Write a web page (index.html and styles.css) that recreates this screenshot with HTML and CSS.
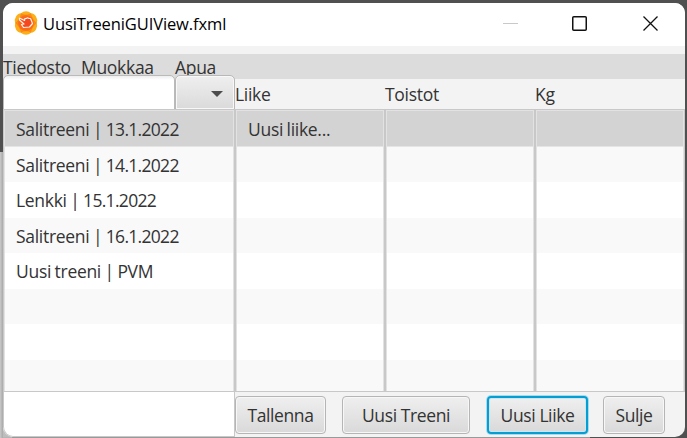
FILE: index.html
```html
<!DOCTYPE html>
<html lang="fi">
<head>
<meta charset="utf-8">
<title>UusiTreeniGUIView.fxml</title>
<link rel="stylesheet" href="styles.css">
</head>
<body>
<main class="window">
  <header class="titlebar">
    <svg class="logo" viewBox="0 0 24 24" width="24" height="24">
      <path d="M12 .3Q15 .3 17 2.300Q20.500 2.500 22 5.500Q24 8.500 22.800 12Q24 15.500 22 18.500Q20.500 21.500 17 21.700Q15 23.700 12 23.700Q9 23.700 7 21.700Q3.500 21.500 2 18.500Q0 15.500 1.200 12Q0 8.500 2 5.500Q3.500 2.500 7 2.300Q9 .3 12 .3Z" fill="#fbb01a"/>
      <path d="M7 2.300Q12 5 17 2.300Q18 8 22.800 12Q18 16 17 21.700Q12 19 7 21.700Q6 16 1.200 12Q6 8 7 2.300Z" fill="#fb8c12"/>
      <circle cx="12" cy="12" r="7.800" fill="#fa6a1c"/>
      <path d="M5.500 7 10.500 9.500 11 7.500 12.500 7.500 13.500 6.800 15 7.500 16.500 7.500 18.500 12.500 15.500 16 9.500 16.500 7.500 13.500 10 13 5.500 9Z" fill="#f4481e" stroke="#fff0e4" stroke-width="1.200" stroke-linejoin="round"/>
    </svg>
    <h1 class="title">UusiTreeniGUIView.fxml</h1>
    <svg class="controls" viewBox="0 0 160 20" width="160" height="20" fill="none">
      <path d="M3 10.500H18" stroke="#c9c9c9"/>
      <rect x="72.750" y="3.750" width="13.500" height="13.500" rx="1" stroke="#111" stroke-width="1.500"/>
      <path d="M143.500 3.500 157.500 17.500M157.500 3.500 143.500 17.500" stroke="#111" stroke-width="1.300"/>
    </svg>
  </header>
  <nav class="menubar"><span class="m1">Tiedosto</span><span class="m2">Muokkaa</span><span class="m3">Apua</span></nav>
  <section class="heads">
    <div class="combo"><div class="field"></div><div class="drop"><i></i></div></div>
    <span>Liike</span><span>Toistot</span><span>Kg</span>
  </section>
  <section class="lists">
    <ul class="list first"><li class="sel">Salitreeni | <span>13.1.2022</span></li><li>Salitreeni | <span>14.1.2022</span></li><li>Lenkki | <span>15.1.2022</span></li><li>Salitreeni | <span>16.1.2022</span></li><li>Uusi treeni | PVM</li><li></li><li></li><li></li></ul>
    <ul class="list"><li class="sel">Uusi liike...</li><li></li><li></li><li></li><li></li><li></li><li></li><li></li></ul>
    <ul class="list"><li class="sel"></li><li></li><li></li><li></li><li></li><li></li><li></li><li></li></ul>
    <ul class="list"><li class="sel"></li><li></li><li></li><li></li><li></li><li></li><li></li><li></li></ul>
  </section>
  <footer class="footer">
    <div class="output"></div>
    <button class="b1">Tallenna</button><button class="b2">Uusi Treeni</button><button class="b3 focus">Uusi Liike</button><button class="b4">Sulje</button>
  </footer>
</main>
</body>
</html>
```
FILE: styles.css
```css
* { box-sizing: border-box; }
body {
  margin: 0;
  width: 687px;
  height: 438px;
  padding: 3px 2px 1px 3px;
  overflow: hidden;
  background: linear-gradient(90deg, #c9c9c9, #a8a8a8) 0 152px / 3px 286px no-repeat, linear-gradient(90deg, #b5b5b5 0 12px, #999 12px 590px, #505050 590px) 0 437px / 687px 1px no-repeat, linear-gradient(#bdbdbd, #bdbdbd) 0 424px / 14px 14px no-repeat, #505050;
  font: 17.5px/24px "Open Sans", "Noto Sans", sans-serif;
  letter-spacing: -0.3px;
  color: #333;
}
.window {
  width: 682px;
  height: 434px;
  border-radius: 10px;
  overflow: hidden;
  background: #f3f3f3;
}
.titlebar {
  display: flex;
  align-items: center;
  height: 43px;
  padding: 0 25px 0 11px;
  background: #fff;
}
.logo { margin-top: -3px; }
.title {
  margin: -2px 0 0 5px;
  font-size: 16.5px;
  font-weight: 400;
  color: #000;
  letter-spacing: -0.1px;
}
.controls { margin-left: auto; margin-top: -3px; }
.menubar {
  display: flex;
  height: 25px;
  margin-top: 8px;
  background: #dcdcdc;
  line-height: 26px;
}
.m1 { width: 78px; }
.m2 { width: 94px; }
.heads {
  display: grid;
  grid-template-columns: 232px 150px 150px 150px;
  height: 30px;
  line-height: 30px;
}
.combo { display: flex; height: 35px; margin-top: -4px; }
.field {
  width: 172px;
  border: 1px solid #bababa;
  border-radius: 5px 5px 0 0;
  background: linear-gradient(#eee, #fff 4px);
}
.drop {
  display: flex;
  align-items: center;
  justify-content: flex-end;
  width: 60px;
  padding-right: 11px;
  border: 1px solid #b8b8b8;
  border-radius: 5px 5px 0 0;
  box-shadow: inset 0 0 0 1px #f8f8f8;
  background: linear-gradient(#efefef, #dadada);
}
.drop i {
  border: 6px solid transparent;
  border-top-color: #4c4c4c;
  border-bottom: 0;
  margin-top: 2px;
}
.lists {
  position: relative;
  display: grid;
  grid-template-columns: 232px 149.5px 150px 150.5px;
  height: 283px;
}
.list {
  margin: 0;
  padding: 1px;
  list-style: none;
  overflow: hidden;
  border: 1px solid #c8c8c8;
  background: #fff;
  box-shadow: inset 0 0 0 1px #e2e2e2;
}
.list li {
  height: 35.5px;
  padding-left: 11px;
  line-height: 36px;
  white-space: nowrap;
  word-spacing: -0.7px;
}
.first span { letter-spacing: -0.7px; }
.list li:nth-child(even) { background: #f9f9f9; }
.list .sel { background: #d3d3d3; border-bottom: 1px solid #e5e5e5; }
.footer { display: flex; height: 45px; }
.output {
  width: 232px;
  border: 1px solid #c8c8c8;
  border-top: 0;
  border-bottom-left-radius: 10px;
  background: #fff;
}
button {
  height: 38px;
  margin: 4px 0 0;
  padding: 0;
  border: 1px solid #b5b5b5;
  border-radius: 4px;
  background: linear-gradient(#efefef, #d9d9d9);
  box-shadow: inset 0 0 0 1px #f7f7f7;
  color: #333;
  font: inherit;
  letter-spacing: -0.4px;
}
.b1 { width: 91px; }
.b2 { width: 128px; margin-left: 16px; }
.b3 { width: 101px; margin-left: 17px; }
.b4 { width: 62px; margin-left: 15px; }
.focus { border: 2px solid #039ed3; box-shadow: 0 0 0 1px #a8dcec, inset 0 0 0 1px #cbe6ef; }
```
